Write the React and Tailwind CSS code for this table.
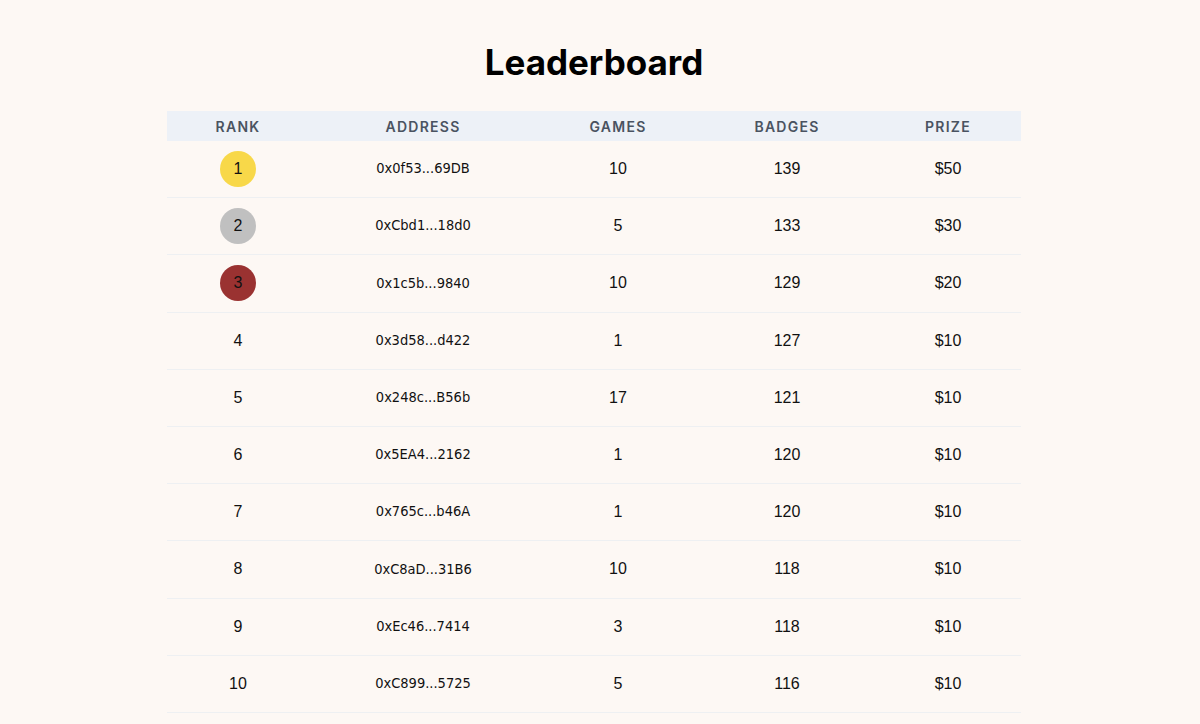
import React from "react";

const rows = [
  [1, "0x0f53...69DB", 10, 139, "$50"],
  [2, "0xCbd1...18d0", 5, 133, "$30"],
  [3, "0x1c5b...9840", 10, 129, "$20"],
  [4, "0x3d58...d422", 1, 127, "$10"],
  [5, "0x248c...B56b", 17, 121, "$10"],
  [6, "0x5EA4...2162", 1, 120, "$10"],
  [7, "0x765c...b46A", 1, 120, "$10"],
  [8, "0xC8aD...31B6", 10, 118, "$10"],
  [9, "0xEc46...7414", 3, 118, "$10"],
  [10, "0xC899...5725", 5, 116, "$10"],
];

const grid = "grid grid-cols-[142px_228px_162px_176px_146px] items-center text-center";

function Rank({ n }) {
  if (n === 1)
    return <span className="inline-flex w-9 h-9 rounded-full bg-[#f8d849] items-center justify-center">1</span>;
  if (n === 2)
    return <span className="inline-flex w-9 h-9 rounded-full bg-[#c0c0c0] items-center justify-center">2</span>;
  if (n === 3)
    return <span className="inline-flex w-9 h-9 rounded-full bg-[#9a3231] items-center justify-center">3</span>;
  return <span>{n}</span>;
}

export default function App() {
  return (
    <div className="min-h-screen bg-[#fdf8f4] pr-[12px] pt-[42px] pb-10 text-[#111]">
      <h1 className="text-center text-[35px] leading-[40px] font-bold text-black font-['Inter',sans-serif]">
        Leaderboard
      </h1>
      <div className="w-[854px] mx-auto mt-[29px]">
        <div className={`${grid} h-[30px] bg-[#edf1f7] font-['Inter',sans-serif] text-[14px] font-semibold tracking-[0.09em] text-[#4a5361] uppercase`}>
          <div>Rank</div>
          <div>Address</div>
          <div>Games</div>
          <div>Badges</div>
          <div>Prize</div>
        </div>
        {rows.map((r) => (
          <div
            key={r[0]}
            className={`${grid} h-[57.2px] border-b border-[#eef0f2] text-[16px] font-['Liberation_Sans',Arial,sans-serif]`}
          >
            <div className="flex justify-center">
              <Rank n={r[0]} />
            </div>
            <div className="font-['DejaVu_Sans_Condensed','Liberation_Sans_Narrow',sans-serif] [font-stretch:condensed] text-[14.5px]">
              {r[1]}
            </div>
            <div>{r[2]}</div>
            <div>{r[3]}</div>
            <div>{r[4]}</div>
          </div>
        ))}
      </div>
    </div>
  );
}
